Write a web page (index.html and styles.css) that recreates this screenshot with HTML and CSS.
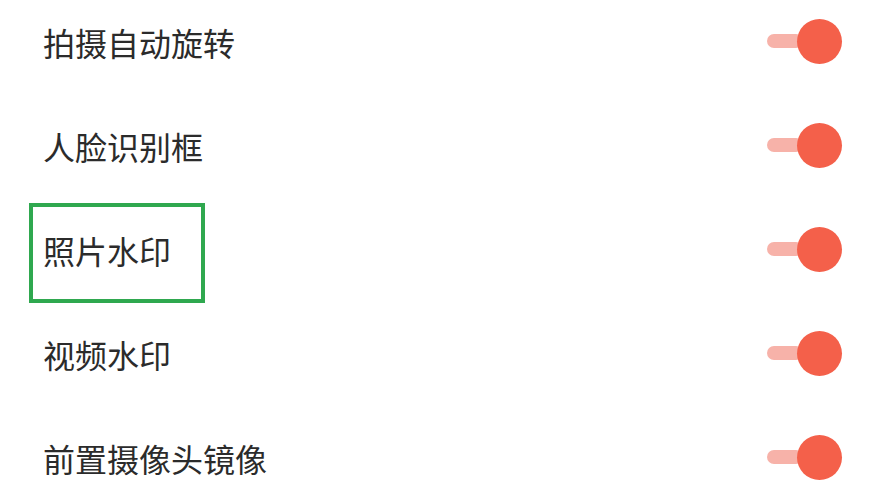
FILE: index.html
```html
<!DOCTYPE html>
<html lang="zh-CN">
<head>
<meta charset="utf-8">
<link rel="stylesheet" href="styles.css">
</head>
<body>
<div class="list">
  <div class="row"><span class="label">拍摄自动旋转</span><div class="toggle"><div class="track"></div><div class="thumb"></div></div></div>
  <div class="row"><span class="label">人脸识别框</span><div class="toggle"><div class="track"></div><div class="thumb"></div></div></div>
  <div class="row"><span class="label">照片水印</span><div class="toggle"><div class="track"></div><div class="thumb"></div></div><div class="highlight"></div></div>
  <div class="row"><span class="label">视频水印</span><div class="toggle"><div class="track"></div><div class="thumb"></div></div></div>
  <div class="row"><span class="label">前置摄像头镜像</span><div class="toggle"><div class="track"></div><div class="thumb"></div></div></div>
</div>
</body>
</html>
```
FILE: styles.css
```css
html, body {
  margin: 0;
  padding: 0;
  background: #ffffff;
  overflow: hidden;
}
body {
  width: 886px;
  height: 500px;
  font-family: "Noto Sans CJK SC", "Noto Sans", sans-serif;
}
.list {
  margin-top: -11px;
  display: flex;
  flex-direction: column;
}
.row {
  position: relative;
  height: 104px;
  display: flex;
  align-items: center;
  justify-content: space-between;
  padding: 0 44px 0 43px;
}
.label {
  font-size: 32px;
  line-height: 1;
  color: #2b2b2b;
  font-weight: 400;
  margin-top: 2px;
}
.toggle {
  display: flex;
  align-items: center;
}
.track {
  width: 36px;
  height: 14px;
  border-radius: 7px;
  background: #f7b2a9;
  margin-right: -6px;
}
.thumb {
  width: 45px;
  height: 45px;
  border-radius: 50%;
  background: #f4604a;
  position: relative;
}
.highlight {
  position: absolute;
  left: 29px;
  top: 6px;
  width: 168px;
  height: 92px;
  border: 4px solid #2fa84f;
}
```
